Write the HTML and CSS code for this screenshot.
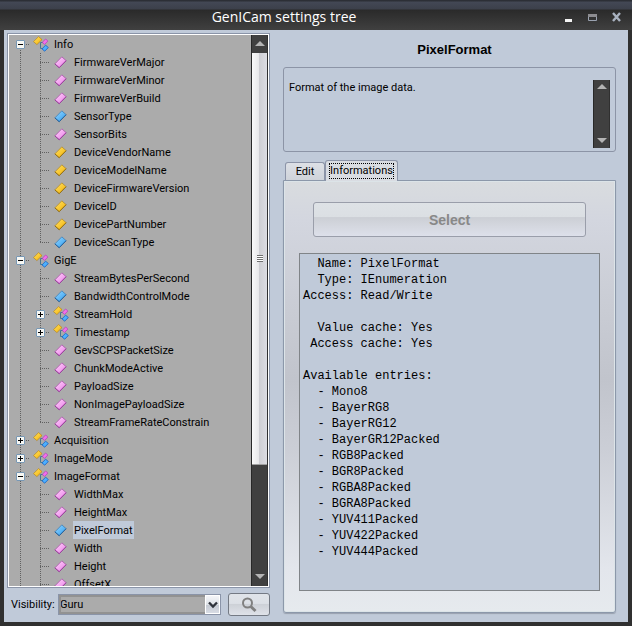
FILE: index.html
```html
<!DOCTYPE html>
<html lang="en">
<head>
<meta charset="utf-8">
<title>GenICam settings tree</title>
<link rel="stylesheet" href="styles.css">
</head>
<body>
<svg class="defs" aria-hidden="true">
  <defs>
    <linearGradient id="gp" x1="0" y1="0" x2="1" y2="1"><stop offset="0" stop-color="#ffd8fc"/><stop offset="1" stop-color="#ea7ae6"/></linearGradient>
    <linearGradient id="gb" x1="0" y1="0" x2="1" y2="1"><stop offset="0" stop-color="#9ad8ff"/><stop offset="1" stop-color="#2b9cf0"/></linearGradient>
    <linearGradient id="gy" x1="0" y1="0" x2="1" y2="1"><stop offset="0" stop-color="#ffe36a"/><stop offset="1" stop-color="#f4b000"/></linearGradient>
    <symbol id="pink" viewBox="0 0 12 12"><path d="M7.200 .8 11.200 4.300 4.800 10.800 .8 7.300Z" fill="url(#gp)" stroke="#a850a8" stroke-width=".7"/><path d="M11.200 4.300 4.800 10.800 .8 7.300" fill="none" stroke="#8c3490" stroke-width=".7"/></symbol>
    <symbol id="blue" viewBox="0 0 12 12"><path d="M7.200 .8 11.200 4.300 4.800 10.800 .8 7.300Z" fill="url(#gb)" stroke="#3c7cb4" stroke-width=".7"/><path d="M11.200 4.300 4.800 10.800 .8 7.300" fill="none" stroke="#1c4f88" stroke-width=".7"/></symbol>
    <symbol id="gold" viewBox="0 0 12 12"><path d="M7.200 .8 11.200 4.300 4.800 10.800 .8 7.300Z" fill="url(#gy)" stroke="#b08828" stroke-width=".7"/><path d="M11.200 4.300 4.800 10.800 .8 7.300" fill="none" stroke="#806010" stroke-width=".7"/></symbol>
    <symbol id="group" viewBox="0 0 16 16">
      <path d="M7.500 6.500V12.500H10M7.500 6.500H10" fill="none" stroke="#4a7890"/>
      <path d="M5.600 .6 9 3.600 3.900 8.600 .5 5.600Z" fill="url(#gy)" stroke="#b07c10" stroke-width=".6"/>
      <path d="M12.600 3 14.900 5 11.600 8.400 9.300 6.400Z" fill="#f070ec" stroke="#b030b0" stroke-width=".6"/>
      <path d="M12.600 9.200 15.300 11.500 11.700 15.200 9 12.900Z" fill="#4cb0ff" stroke="#1660c0" stroke-width=".8"/>
    </symbol>
  </defs>
</svg>
<div class="window">
  <header class="titlebar">
    <h1 class="title">GenICam settings tree</h1>
    <div class="controls">
      <button class="control" aria-label="Minimize"><svg viewBox="0 0 10 10"><path d="M1 7h7v3H1z" fill="#f4f4f4"/></svg></button>
      <button class="control" aria-label="Maximize"><svg viewBox="0 0 10 10"><path d="M.5 2.500h8v6h-8z" fill="none" stroke="#9aa2b0"/><path d="M0 2h9v3H0z" fill="#8c8c90"/></svg></button>
      <button class="control" aria-label="Close"><svg viewBox="0 0 10 10"><path d="M1 1 8 9M8 1 1 9" stroke="#a9b2c0" stroke-width="2.400"/></svg></button>
    </div>
  </header>
  <main class="content">
    <section class="left">
      <div class="treebox">
        <div class="tree" id="tree" role="tree" aria-label="Settings"></div>
        <div class="scrollbar">
          <button class="arrow" aria-label="Scroll up"><svg viewBox="0 0 10 6"><path d="M5 0 10 5H0z" fill="#b4b4b4"/></svg></button>
          <div class="track"><div class="thumb"><span class="grip"></span></div></div>
          <button class="arrow" aria-label="Scroll down"><svg viewBox="0 0 10 6"><path d="M0 0h10L5 5z" fill="#b4b4b4"/></svg></button>
        </div>
      </div>
      <div class="filter">
        <label for="visibility">Visibility:</label>
        <div class="combo">
          <select id="visibility"><option>Guru</option><option>Expert</option><option>Beginner</option></select>
          <span class="drop"><svg viewBox="0 0 10 8"><path d="M1 1.500 5 5.500 9 1.500" fill="none" stroke="#30343c" stroke-width="2.400"/></svg></span>
        </div>
        <button class="search" aria-label="Search"><svg viewBox="0 0 16 16"><circle cx="6.500" cy="6" r="4.500" fill="none" stroke="#808080" stroke-width="2"/><path d="M9.800 9.500 14.500 14" stroke="#808080" stroke-width="3"/></svg></button>
      </div>
    </section>
    <section class="right">
      <h2 class="heading">PixelFormat</h2>
      <div class="description">
        <textarea class="summary" readonly aria-label="Description">Format of the image data.</textarea>
        <div class="scrollbar short">
          <button class="arrow" aria-label="Scroll up"><svg viewBox="0 0 10 6"><path d="M5 0 10 5H0z" fill="#b4b4b4"/></svg></button>
          <div class="track"></div>
          <button class="arrow" aria-label="Scroll down"><svg viewBox="0 0 10 6"><path d="M0 0h10L5 5z" fill="#b4b4b4"/></svg></button>
        </div>
      </div>
      <div class="tabs" role="tablist">
        <button class="tab" role="tab">Edit</button>
        <button class="tab active" role="tab" aria-selected="true"><span>Informations</span></button>
      </div>
      <div class="panel" role="tabpanel">
        <button class="select" disabled>Select</button>
        <textarea class="info" readonly aria-label="Informations">
  Name: PixelFormat
  Type: IEnumeration
Access: Read/Write

  Value cache: Yes
 Access cache: Yes

Available entries:
  - Mono8
  - BayerRG8
  - BayerRG12
  - BayerGR12Packed
  - RGB8Packed
  - BGR8Packed
  - RGBA8Packed
  - BGRA8Packed
  - YUV411Packed
  - YUV422Packed
  - YUV444Packed</textarea>
      </div>
    </section>
  </main>
</div>
<script src="tree.js"></script>
</body>
</html>
```
FILE: styles.css
```css
* { box-sizing: border-box; }
body { margin: 0; background: #303030; color: #000; font-family: Roboto, "Liberation Sans", sans-serif; font-size: 11px; }
button, select, textarea { font: inherit; color: inherit; margin: 0; padding: 0; border: 0; border-radius: 0; }
svg { display: block; }
.defs { position: absolute; width: 0; height: 0; }

.window { display: flex; flex-direction: column; height: 100vh; padding: 0 4px 4px; background: #303030; }
.titlebar { display: flex; align-items: center; height: 30px; margin: 0 -4px; padding: 4px 10px 0 8px; background: linear-gradient(#2c2f36 0, #2c2f36 1px, #434855 2px, #3c404b 9px, #2a2a2a 10px, #404040 30px); flex: none; }
.title { flex: 1; margin: 0; text-align: center; color: #fff; font: 14px/20px "Open Sans", sans-serif; }
.controls { display: flex; gap: 14px; margin-left: 4px; }
.control { width: 10px; height: 10px; background: none; }
.control svg { width: 10px; height: 10px; }

.content { flex: 1; min-height: 0; display: grid; grid-template-columns: 263fr 333fr; column-gap: 13px; padding: 3px 12px 4px 3px; background: #c0cad9; }
.left, .right { display: flex; flex-direction: column; min-width: 0; min-height: 0; }

.treebox { flex: 1; min-height: 0; display: flex; border: 1px solid #8a94a8; outline: 1px solid #fff; outline-offset: -2px; padding: 1px; background: #ababab; }
.tree { flex: 1; min-width: 0; overflow: hidden; padding-left: 1px; }
.row { display: flex; height: 18px; align-items: stretch; }
.cell { flex: none; width: 20px; display: grid; place-items: center; background: repeating-linear-gradient(#606060 0 1px, transparent 1px 2px) 10px 0 / 1px 100% no-repeat; }
.cell.branch { background: repeating-linear-gradient(#606060 0 1px, transparent 1px 2px) 10px 0 / 1px 100% no-repeat, repeating-linear-gradient(90deg, #606060 0 1px, transparent 1px 2px) 10px 9px / 10px 1px no-repeat; }
.cell.end { background-size: 1px 10px, 10px 1px; }
.cell.start { background-size: 1px 9px, 10px 1px; background-position: 10px 9px, 10px 9px; }
.toggle { width: 9px; height: 9px; border: 1px solid #7898b5; border-radius: 1px; background: linear-gradient(#000, #000) center / 5px 1px no-repeat, #f8f8f4; }
.toggle.closed { background: linear-gradient(#000, #000) center / 5px 1px no-repeat, linear-gradient(#000, #000) center / 1px 5px no-repeat, #f8f8f4; }
.icon { flex: none; width: 23px; padding: 3px 0 0 4px; }
.icon svg { width: 13px; height: 13px; }
.icon.group { padding: 1px 0 0 3px; }
.icon.group svg { width: 16px; height: 16px; }
.name { padding: 0 1px; line-height: 19px; white-space: nowrap; }
.name.selected { background: #c0cad9; }

.scrollbar { flex: none; width: 17px; display: flex; flex-direction: column; background: #404040; border-left: 1px solid #282828; border-right: 1px solid #303030; }
.arrow { flex: none; height: 18px; display: grid; place-items: center; background: none; }
.arrow svg { width: 10px; height: 6px; }
.track { flex: 1; min-height: 0; }
.thumb { height: 80%; display: grid; place-items: center; background: linear-gradient(90deg, #fafafa, #e8e8ea 45%, #cfcfd4 50%, #dcdce2); border-bottom: 1px solid #a0a0a0; }
.grip { width: 6px; height: 7px; background: repeating-linear-gradient(#707070 0 1px, #fff 1px 2px); }

.filter { display: flex; align-items: center; gap: 7px; padding: 5px 0 2px 4px; flex: none; }
.filter label { width: 40px; white-space: nowrap; }
.combo { flex: 1; position: relative; height: 21px; }
.combo select { display: block; width: 100%; height: 21px; padding: 0 18px 0 1px; appearance: none; background: #ababab; border: 1px solid #8a94a8; outline: 2px solid #929292; outline-offset: -3px; }
.drop { position: absolute; top: 1px; right: 1px; width: 15px; height: 19px; display: grid; place-items: center; pointer-events: none; background: linear-gradient(#f4f5f8, #dfe3e8 50%, #c4c9d2 51%, #d8dce4); border: 1px solid #fff; }
.drop svg { width: 10px; height: 8px; }
.search { width: 42px; height: 23px; display: grid; place-items: center; border: 1px solid #747a84; border-radius: 3px; background: linear-gradient(#e0e4e9, #dce0e6 45%, #cdd1d7 50%, #dfe2e9); }
.search svg { width: 16px; height: 16px; }

.heading { margin: 0; padding-left: 10px; text-align: center; font: bold 13px/34px "Liberation Sans", sans-serif; flex: none; }
.description { display: flex; flex: none; height: 85px; padding: 12px 5px 3px; border: 1px solid #8c94a6; border-radius: 3px; }
.summary, .info { display: block; resize: none; background: none; outline: 0; overflow: hidden; }
.summary { flex: 1; min-width: 0; line-height: 15px; }
.short .arrow { height: 14px; }

.tabs { display: flex; align-items: flex-end; flex: none; margin-top: 8px; padding-left: 2px; height: 20px; }
.tab { height: 18px; width: 40px; border: 1px solid #8c94a8; border-bottom: 0; border-radius: 3px 3px 0 0; background: linear-gradient(#dde0e6, #cfd3da); }
.tab.active { height: 21px; width: 73px; background: #d9dce2; position: relative; z-index: 1; margin-bottom: -1px; }
.tab.active span { display: inline-block; border: 1px dotted #000; line-height: 14px; }
.panel { flex: 1; min-height: 0; margin-bottom: 5px; display: flex; flex-direction: column; padding: 21px 15px; border: 1px solid #8c98aa; border-radius: 0 0 3px 3px; background: linear-gradient(#d9dcdf, #d3d6df 9%, #c9ccd4 30%, #c1c4cc 46%, #cbced6 62%, #e3e6ec 90%, #e6eaee); box-shadow: inset 0 0 0 1px #dce4e8, 0 1px 1px #98a0ae; }
.select { flex: none; height: 35px; margin: 0 14px 16px; border: 1px solid #9a9eaa; border-radius: 3px; background: linear-gradient(#dee2e6, #dbdfe3 43%, #cccfd5 44%, #dde0ea); color: #888; font: bold 14px "Liberation Sans", sans-serif; }
.info { flex: 1; min-height: 0; width: 100%; padding: 2px 3px; border: 1px solid #808488; background: #c0cad9; font: 12px/16px "Liberation Mono", monospace; white-space: pre; }
```
FILE: tree.js
```js
const nodes = [
  ['Info', ['pFirmwareVerMajor', 'pFirmwareVerMinor', 'pFirmwareVerBuild', 'bSensorType', 'pSensorBits', 'yDeviceVendorName', 'yDeviceModelName', 'yDeviceFirmwareVersion', 'yDeviceID', 'yDevicePartNumber', 'bDeviceScanType']],
  ['GigE', ['pStreamBytesPerSecond', 'bBandwidthControlMode', 'gStreamHold', 'gTimestamp', 'pGevSCPSPacketSize', 'pChunkModeActive', 'pPayloadSize', 'pNonImagePayloadSize', 'pStreamFrameRateConstrain']],
  ['Acquisition', []],
  ['ImageMode', []],
  ['ImageFormat', ['pWidthMax', 'pHeightMax', 'bPixelFormat', 'pWidth', 'pHeight', 'pOffsetX']]
];
const icons = { p: 'pink', b: 'blue', y: 'gold', g: 'group' };

function row(cells, icon, name) {
  const selected = name === 'PixelFormat';
  return `<div class="row" role="treeitem" aria-selected="${selected}">${cells}` +
    `<span class="icon ${icon}"><svg><use href="#${icon}"/></svg></span>` +
    `<span class="name${selected ? ' selected' : ''}">${name}</span></div>`;
}

function toggle(name, closed) {
  return `<button class="toggle${closed ? ' closed' : ''}" aria-label="Toggle ${name}"></button>`;
}

let html = '';
nodes.forEach(([name, children], i) => {
  html += row(`<span class="cell branch${i ? '' : ' start'}">${toggle(name, !children.length)}</span>`, 'group', name);
  children.forEach((child, j) => {
    const icon = icons[child[0]];
    const label = child.slice(1);
    const end = j === children.length - 1 && name !== 'ImageFormat' ? ' end' : '';
    html += row(`<span class="cell"></span><span class="cell branch${end}">${icon === 'group' ? toggle(label, true) : ''}</span>`, icon, label);
  });
});
document.getElementById('tree').innerHTML = html;
```
